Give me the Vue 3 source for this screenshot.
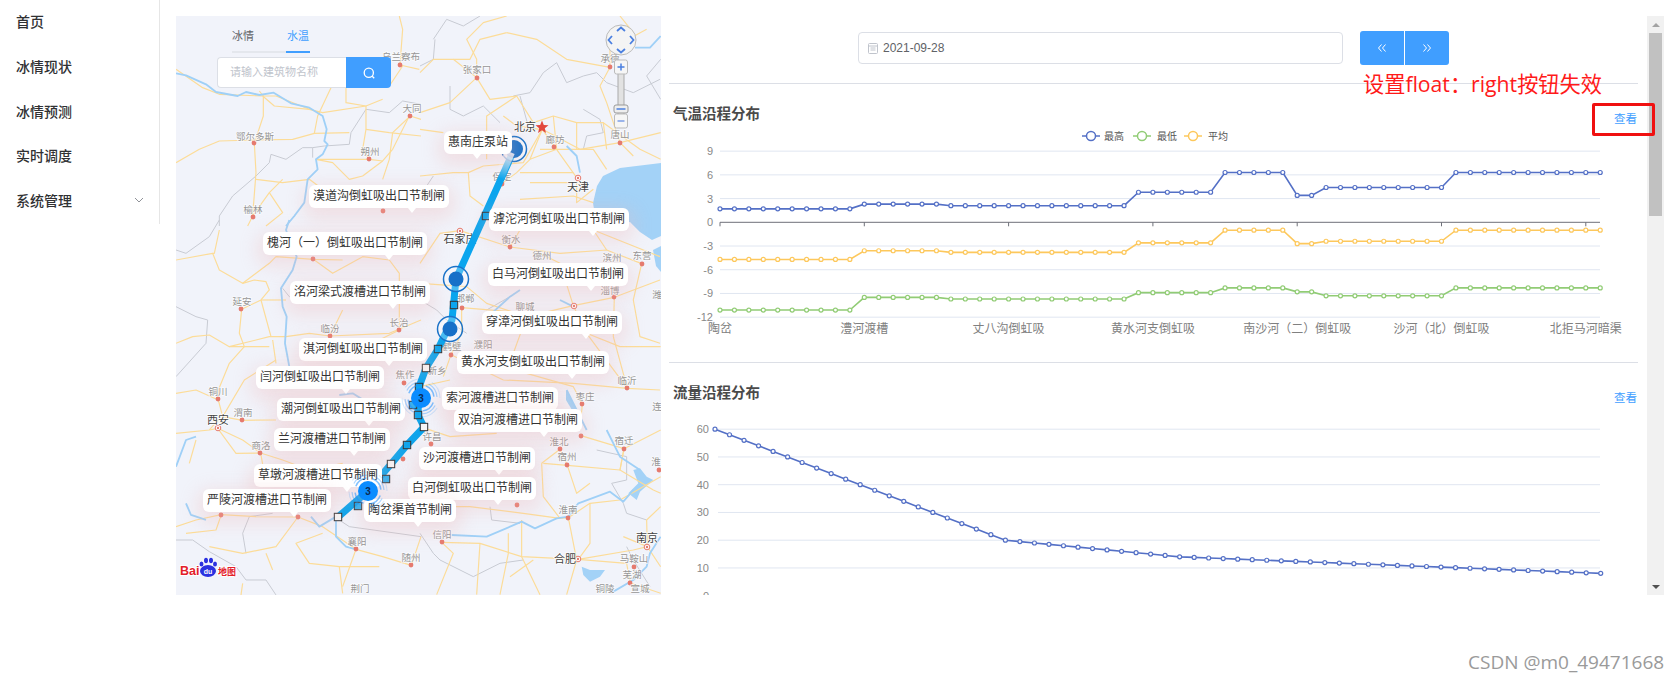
<script setup>
const menu = ["首页", "冰情现状", "冰情预测", "实时调度", "系统管理"];

// 地图底图：按 3 倍裁剪图里的坐标抄下来的，每块一个原点
const tiles = [
  {
    x: 176, y: 16,
    roads: [
      "0,440 70,400 130,375 235,372 350,370 415,352 520,350", "235,382 262,300 262,240 250,225",
      "0,160 80,215 130,235 260,240 300,240 400,280", "260,240 295,270 400,280 440,290 570,270 620,250",
      "235,382 240,470 230,600 215,630", "415,352 425,300 465,215 455,190",
      "510,215 510,260 570,270 570,340 560,400 580,430 620,435 650,400 700,300", "580,430 500,430 420,430",
      "420,430 470,440 520,490 560,480 620,435", "240,490 320,500 400,490 440,520", "280,530 320,590 270,630",
      "672,147 680,40 670,0", "672,147 730,160", "640,210 680,150", "703,300 650,350 640,430 620,490",
      "703,300 735,310", "570,340 640,350 735,360", "230,600 280,530 320,490",
    ],
    borders: [
      "130,630 130,600 170,540 240,480 280,440 285,415 330,430 380,395 410,395 410,425",
      "410,395 445,390 520,385 525,350 570,280 640,290 680,255 735,265",
    ],
    rivers: [
      "0,172 30,178 90,205 120,228 185,240 210,228 250,237 293,230 345,262 400,275 440,300 452,340 445,375 455,385 440,415 420,430 425,460 395,490 385,560 355,600 330,630",
    ],
  },
  {
    x: 420, y: 16,
    roads: [
      "170,185 170,130 140,70 190,20 260,0", "170,185 100,130 40,130 0,170",
      "170,185 210,250 290,240 340,320 400,300 470,320 550,320 660,400 722,430", "0,290 90,260 170,185",
      "260,50 180,70 150,130 100,130", "260,50 350,70 440,130 570,154 570,100 680,40",
      "570,154 540,210 560,260 600,380 640,420", "0,480 100,470 145,470 190,450 310,440 367,340",
      "367,340 330,430 290,470 250,500 200,580", "367,340 470,485 470,560 520,520",
      "367,340 480,400 600,380 722,350", "360,400 520,400 560,460", "300,470 460,470", "330,500 460,500",
      "145,470 150,540 190,570", "0,340 70,350", "250,300 290,330 360,340", "600,0 640,50",
      "200,430 200,300 290,240", "470,320 470,400", "550,320 560,400", "400,300 410,400 330,430", "300,550 460,540 520,560",
    ],
    borders: [
      "40,70 80,10 130,30 180,0", "0,150 40,130 45,70", "90,210 90,280 130,300 190,270 240,320",
      "280,240 330,230 370,170 410,140 440,200 490,180 530,170 560,200 640,230 720,190", "330,350 300,240",
      "490,280 540,310 550,350 500,360 490,400", "722,130 680,180 722,250", "40,480 20,510 40,560",
    ],
    rivers: ["645,95 690,95 722,60", "440,390 470,420 480,470"],
  },
  {
    x: 176, y: 220,
    roads: [
      "0,120 110,100 130,150 200,190 280,130 300,110 412,118 500,120", "110,100 115,100 130,30",
      "200,190 235,180 270,185 280,210 255,240 197,268 190,340 205,380 160,430 127,510 127,540 140,590",
      "0,370 50,350 100,345 160,380 280,350 330,350 400,340 462,348 500,270", "255,240 285,350", "255,240 330,240",
      "160,380 280,380", "300,420 205,480 140,590", "140,590 199,601 300,600",
      "412,118 470,160 560,110 640,120 670,160 670,330 590,370", "462,348 640,340 735,300",
      "0,520 60,510 127,540", "100,630 127,600", "290,360 300,430",
    ],
    borders: ["0,260 60,290 95,300 90,370 0,470", "130,0 100,50 30,100 0,90", "320,205 340,230 480,230"],
    rivers: [
      "340,0 330,30 362,110 350,150 315,205 320,260 332,290 327,370 340,440 330,500",
      "490,525 530,520 570,545",
    ],
  },
  {
    x: 420, y: 220,
    roads: [
      "120,32 60,40 0,130", "120,32 270,81 420,100 560,90 665,131", "270,81 300,30",
      "0,190 140,200 200,250 320,290 460,257 583,232 720,180", "460,257 420,130 360,100", "460,257 500,340 622,505",
      "320,290 280,400 320,460 460,500 487,552 480,630", "125,263 125,340 93,404 70,470",
      "93,404 250,480 460,490 622,505 720,510", "583,232 580,350 622,505", "665,131 640,240 660,350 720,370",
      "560,90 520,30", "125,263 330,280 500,340 600,380 722,380", "0,500 90,480", "520,30 720,110",
    ],
    borders: ["0,240 50,270 80,300 140,340", "200,270 270,230"],
    rivers: ["215,280 270,230 300,210", "420,240 460,260", "440,510 470,570 500,630"],
  },
  {
    x: 176, y: 420,
    roads: [
      "0,40 100,30 125,25 200,60 254,99 320,120 400,150 500,130", "125,25 180,100 254,99 270,190",
      "0,320 60,300 136,284 240,290 366,291 440,320 540,388", "136,284 120,330 30,340", "366,291 300,380 200,400 100,380",
      "540,388 620,410 706,436", "540,388 500,500", "440,340 360,370 400,430 490,440 610,440", "490,440 500,520",
      "706,436 735,350", "200,490 195,525", "270,400 290,450", "60,60 40,130",
    ],
    borders: [
      "0,360 50,360 100,395 180,440 210,480 270,480 300,525", "200,340 220,290 290,280",
      "490,300 520,320 735,350", "200,340 210,400",
    ],
    rivers: ["0,140 30,60 60,50", "30,250 45,285 90,300", "405,290 430,320 480,290", "480,300 480,350 510,380 540,388"],
  },
  {
    x: 420, y: 420,
    roads: [
      "0,260 150,260 310,280 420,295 445,293 510,250 600,240 722,170", "365,130 370,230 420,295",
      "442,136 470,220 510,190", "420,88 442,136 600,150 612,86 722,30", "442,136 370,130", "420,88 365,130",
      "612,86 600,150 700,210 722,220", "65,367 180,370 305,410 475,418 640,390 682,380", "65,367 100,400 50,524",
      "180,370 170,524", "265,340 265,400 240,524", "305,300 305,410 360,524", "445,293 470,420 440,524",
      "510,250 510,370 475,418", "475,418 620,430 631,489 722,520", "682,380 722,440", "610,350 682,380 680,300 722,260",
      "0,20 90,50 230,40", "483,47 612,86", "340,420 270,470",
    ],
    borders: [
      "0,340 40,400 60,420 160,470 240,430 310,420", "210,260 215,300 300,310",
      "530,90 620,110 620,180 575,190 610,250 620,280 680,300", "620,380 640,420 690,500",
    ],
    rivers: [
      "95,345 200,350 305,305 345,325 410,295 445,290 475,250 570,215 610,245 640,210",
      "580,515 640,480 680,440 690,400 722,350", "560,30 600,110 660,150",
    ],
  },
];

const lakes = [
  "661,163 620,168 603,176 597,186 593,203 597,228 630,222 640,232 652,240 661,236",
  "653,250 661,246 661,272 656,266",
  "633.3,470 640,468.3 646.7,476.7 653.3,480 640,491.7 636.7,500 628.3,493.3 638.3,483.3",
  "581.7,566.7 590,570 605,570 600,576.7 590,581.7 583.3,575",
  "566,390 572,400 578,412 572,410 566,400",
];

const cities = [
  ["乌兰察布", 401, 60, 400, 65], ["鄂尔多斯", 255, 140, 254, 143], ["朔州", 370, 155, 369, 159],
  ["大同", 412, 112, 410, 116], ["榆林", 253, 213, 253, 217], ["张家口", 477, 73, 477, 78],
  ["承德", 610, 62, 610, 67], ["唐山", 620, 138, 620, 143], ["廊坊", 555, 143, 554, 147],
  ["保定", 502, 180, 502, 184], ["衡水", 511, 243, 510, 247], ["德州", 542, 259], ["滨州", 612, 261],
  ["东营", 642, 259, 642, 264], ["淄博", 610, 294, 614, 297], ["聊城", 525, 310], ["邯郸", 465, 302, 462, 308],
  ["濮阳", 483, 348], ["鹤壁", 452, 350, 451, 355], ["新乡", 437, 374], ["枣庄", 585, 400, 582, 404],
  ["临沂", 627, 384, 627, 388], ["连", 657, 410], ["潍", 657, 298], ["延安", 242, 305, 241, 309],
  ["临汾", 330, 332, 330, 336], ["长治", 399, 326, 399, 330], ["焦作", 405, 378, 404, 383],
  ["铜川", 218, 395, 218, 399], ["渭南", 243, 416, 242, 420], ["商洛", 261, 449, 260, 453],
  ["襄阳", 357, 545, 356, 549], ["随州", 411, 561, 411, 565], ["荆门", 360, 592], ["许昌", 432, 440, 431, 444],
  ["淮北", 559, 445, 560, 449], ["宿州", 567, 460, 567, 465], ["宿迁", 624, 444, 624, 449],
  ["淮", 656, 465, 659, 470], ["淮南", 568, 513, 568, 518], ["信阳", 442, 538, 442, 542],
  ["马鞍山", 634, 562, 634, 567], ["芜湖", 632, 578, 630, 583], ["铜陵", 605, 592], ["宣城", 640, 592],
];
const bigCities = [
  ["北京", 525, 131], ["天津", 578, 191], ["石家庄", 460, 243], ["西安", 218, 424], ["合肥", 565, 563], ["南京", 647, 542],
];
const ringDots = [[578, 178], [460, 231], [574, 306], [218, 428], [578, 559], [647, 547]];
const plainDots = [[221, 515], [298, 517], [403, 459], [517, 505], [581, 436], [313, 259], [383, 211]];

const callouts = [
  ["惠南庄泵站", 444, 131, 477], ["漠道沟倒虹吸出口节制闸", 309, 185, 412], ["滹沱河倒虹吸出口节制闸", 489, 208, 593],
  ["槐河（一）倒虹吸出口节制闸", 263, 232, 389], ["洺河梁式渡槽进口节制闸", 290, 281, 393],
  ["白马河倒虹吸出口节制闸", 488, 263, 591], ["穿漳河倒虹吸出口节制闸", 482, 311, 586],
  ["淇河倒虹吸出口节制闸", 299, 338, 389], ["黄水河支倒虹吸出口节制闸", 457, 351, 572],
  ["闫河倒虹吸出口节制闸", 256, 366, 346], ["索河渡槽进口节制闸", 442, 387, 500],
  ["潮河倒虹吸出口节制闸", 277, 398, 369], ["双洎河渡槽进口节制闸", 454, 409, 544],
  ["兰河渡槽进口节制闸", 274, 428, 354], ["沙河渡槽进口节制闸", 419, 447, 499],
  ["草墩河渡槽进口节制闸", 254, 464, 347], ["白河倒虹吸出口节制闸", 408, 477, 498],
  ["严陵河渡槽进口节制闸", 203, 489, 294], ["陶岔渠首节制闸", 364, 499, 418],
].map(([text, x, y, tail]) => ({ text, left: x - 176, top: y - 16, tail: tail - x }));

const canal = "514,150 456,279 452,320 438,349 426,368 419,387 418,415 424,427 407,445 391,464 368,491 338,517";
const gates = [
  [486, 216, false], [454, 305, false], [438, 349, false], [426, 368, true], [419, 387, false], [413, 405, false],
  [418, 415, false], [424, 427, true], [407, 445, false], [391, 464, true], [386, 479, false], [358, 506, false], [338, 517, true],
];
const pumps = [[514, 149, 9], [456, 279, 7.5], [450, 329, 7.5]];
const clusters = [[421, 398], [368, 491]];

// 折线图数据
function steps(parts) {
  return parts.flatMap(([n, v]) => Array(n).fill(v));
}
const high = steps([[10, 1.7], [6, 2.3], [13, 2.1], [6, 3.8], [5, 6.3], [2, 3.4], [9, 4.4], [11, 6.3]]);
const low = steps([[10, -11.1], [6, -9.5], [13, -9.7], [6, -8.9], [5, -8.3], [2, -8.8], [9, -9.3], [11, -8.3]]);
const avg = steps([[10, -4.7], [6, -3.6], [13, -3.8], [6, -2.6], [5, -1], [2, -2.7], [9, -2.4], [11, -1]]);

const tempY = (v) => 222.3 - v * 7.905;
const tempX = (i) => 720 + i * 14.43;
const tempSeries = [
  { color: "#fdc85c", data: avg },
  { color: "#91cc75", data: low },
  { color: "#5470c6", data: high },
].map((s) => {
  const pts = s.data.map((v, i) => [tempX(i), tempY(v)]);
  return { color: s.color, pts, line: pts.map((p) => p.join(",")).join(" ") };
});
const tempTicks = [9, 6, 3, 0, -3, -6, -9, -12].map((v) => ({ v, y: tempY(v) }));
const tempLabels = ["陶岔", "澧河渡槽", "丈八沟倒虹吸", "黄水河支倒虹吸", "南沙河（二）倒虹吸", "沙河（北）倒虹吸", "北拒马河暗渠"]
  .map((text, i) => ({ text, x: tempX(i * 10) }));
const legend = [
  { name: "最高", color: "#5470c6", x: 1082, tx: 1104 },
  { name: "最低", color: "#91cc75", x: 1133, tx: 1157 },
  { name: "平均", color: "#fdc85c", x: 1184, tx: 1208 },
];

const flowY = (v) => 595.7 - v * 2.775;
const flowPts = Array.from({ length: 62 }, (_, i) => {
  let v;
  if (i <= 20) v = 60 - i * 2;
  else if (i <= 32) v = 20 - (i - 20) * 0.5;
  else v = 14 - (i - 32) * 0.205;
  return [715 + i * 14.52, flowY(v)];
});
const flowLine = flowPts.map((p) => p.join(",")).join(" ");
const flowTicks = [60, 50, 40, 30, 20, 10, 0].map((v) => ({ v, y: flowY(v) }));
</script>

<template>
  <div class="page">
    <aside class="sidebar">
      <div v-for="(item, i) in menu" :key="item" class="menu-item">
        <span>{{ item }}</span>
        <svg v-if="i === 4" class="chevron" width="10" height="6" viewBox="0 0 10 6">
          <path d="M1 1l4 4 4-4" fill="none" stroke="#909399" stroke-width="1" />
        </svg>
      </div>
    </aside>

    <main class="content">
      <section class="map">
        <svg class="map-svg" width="485" height="579" viewBox="176 16 485 579">
          <defs>
            <linearGradient id="canal-fade" gradientUnits="userSpaceOnUse" x1="510" y1="152" x2="499" y2="178">
              <stop offset="0" stop-color="#f3f5fb" stop-opacity="0.9" />
              <stop offset="1" stop-color="#f3f5fb" stop-opacity="0" />
            </linearGradient>
          </defs>
          <polygon v-for="l in lakes" :key="l" :points="l" fill="#a3d2f7" />
          <g v-for="t in tiles" :key="t.x + '-' + t.y" :transform="`translate(${t.x} ${t.y}) scale(0.3333)`" fill="none" stroke-linejoin="round">
            <polyline v-for="b in t.borders" :key="b" :points="b" stroke="#c8cbd3" stroke-width="3" />
            <polyline v-for="r in t.roads" :key="r" :points="r" stroke="#fcdc98" stroke-width="3.5" />
            <polyline v-for="r in t.rivers" :key="r" :points="r" stroke="#9fd0f7" stroke-width="5.5" />
          </g>
          <circle v-for="c in cities.filter((c) => c[3])" :key="c[0]" :cx="c[3]" :cy="c[4]" r="2.4" fill="#e57a6e" />
          <circle v-for="d in plainDots" :key="d[0]" :cx="d[0]" :cy="d[1]" r="2.4" fill="#e57a6e" />
          <g v-for="d in ringDots" :key="d[0]">
            <circle :cx="d[0]" :cy="d[1]" r="2.8" fill="#fff" stroke="#e57a6e" />
            <circle :cx="d[0]" :cy="d[1]" r="1.2" fill="#e57a6e" />
          </g>
          <text v-for="c in cities" :key="c[0]" :x="c[1]" :y="c[2]" class="city">{{ c[0] }}</text>
          <text v-for="c in bigCities" :key="c[0]" :x="c[1]" :y="c[2]" class="city big">{{ c[0] }}</text>
          <polygon points="542,120.5 543.8,125 548.5,125.3 544.8,128.2 546,133 542,130.3 538,133 539.2,128.2 535.5,125.3 540.2,125" fill="#e2483d" />

          <polyline :points="canal" fill="none" stroke="#0aa5ee" stroke-width="7" stroke-linejoin="round" stroke-linecap="round" />
          <g v-for="p in pumps" :key="p[1]">
            <circle :cx="p[0]" :cy="p[1]" r="12.5" fill="rgba(255,255,255,0.25)" stroke="#1a73c9" stroke-width="1.5" />
            <circle :cx="p[0]" :cy="p[1]" :r="p[2]" fill="#1670c8" />
          </g>
          <path d="M510 152L499 178" stroke="url(#canal-fade)" stroke-width="10" />
          <rect v-for="g in gates" :key="g[0] + '-' + g[1]" :x="g[0] - 3.7" :y="g[1] - 3.7" width="7.4" height="7.4" :fill="g[2] ? '#f6f6f6' : 'rgba(10,165,238,0.85)'" stroke="#333" stroke-width="1" />
        </svg>

        <div v-for="c in callouts" :key="c.text" class="callout" :style="{ left: c.left + 'px', top: c.top + 'px', '--tail': c.tail + 'px' }">{{ c.text }}</div>

        <svg class="map-svg over" width="485" height="579" viewBox="176 16 485 579">
          <g v-for="c in clusters" :key="c[0]" fill="none" stroke="#1e90ff">
            <circle :cx="c[0]" :cy="c[1]" r="13" stroke-width="1.5" stroke-opacity="0.55" stroke-dasharray="14 6.4" :transform="`rotate(20 ${c[0]} ${c[1]})`" />
            <circle :cx="c[0]" :cy="c[1]" r="16" stroke-width="1.2" stroke-opacity="0.35" stroke-dasharray="16 9" :transform="`rotate(28 ${c[0]} ${c[1]})`" />
            <circle :cx="c[0]" :cy="c[1]" r="19" stroke-width="1" stroke-opacity="0.18" stroke-dasharray="18 12" :transform="`rotate(32 ${c[0]} ${c[1]})`" />
            <circle :cx="c[0]" :cy="c[1]" r="10" fill="#0a8cff" stroke="none" />
            <text :x="c[0]" :y="c[1] + 3.5" class="cluster-num">3</text>
          </g>

          <!-- 平移缩放控件 -->
          <circle cx="621" cy="40" r="15" fill="#f4f4f4" stroke="#bbb" />
          <g fill="none" stroke="#4a7fe0" stroke-width="1.8">
            <path d="M617 31l4-3.5 4 3.5" />
            <path d="M617 49l4 3.5 4-3.5" />
            <path d="M612 36l-3.5 4 3.5 4" />
            <path d="M630 36l3.5 4-3.5 4" />
          </g>
          <rect x="618" y="73" width="6" height="42" fill="#e2e2e2" stroke="#aaa" />
          <rect x="614.5" y="60" width="13" height="14" rx="2" fill="#f6f6f6" stroke="#bbb" />
          <path d="M617.5 67h7M621 63.5v7" stroke="#4a7fe0" stroke-width="1.5" />
          <rect x="614" y="105" width="14" height="8" rx="2" fill="#eee" stroke="#999" />
          <path d="M616.5 109h9" stroke="#4a7fe0" stroke-width="1.5" />
          <rect x="614.5" y="114" width="13" height="14" rx="2" fill="#f6f6f6" stroke="#bbb" />
          <path d="M617.5 121h7" stroke="#7c9ee6" stroke-width="1.5" />

          <!-- 百度地图 logo -->
          <text x="180" y="575" class="logo">Bai</text>
          <g fill="#2b31e0" stroke="#fff" stroke-width="0.6" paint-order="stroke">
            <ellipse cx="208" cy="571" rx="8" ry="6" />
            <ellipse cx="201.5" cy="564" rx="2" ry="2.6" />
            <ellipse cx="206" cy="560.5" rx="2" ry="2.8" />
            <ellipse cx="211" cy="560.5" rx="2" ry="2.8" />
            <ellipse cx="215" cy="564" rx="2" ry="2.6" />
          </g>
          <text x="208" y="574" class="logo-du">du</text>
          <text x="218" y="575" class="logo map-word">地图</text>
        </svg>

        <div class="map-tools">
          <div class="tabs">
            <span class="tab first">冰情</span>
            <span class="tab active">水温</span>
          </div>
          <div class="search">
            <span class="search-input">请输入建筑物名称</span>
            <span class="search-btn">
              <svg width="14" height="14" viewBox="0 0 14 14">
                <circle cx="6.8" cy="6.8" r="4.6" fill="none" stroke="#fff" stroke-width="1.3" />
                <path d="M10.2 10.2l2 2" stroke="#fff" stroke-width="1.3" />
              </svg>
            </span>
          </div>
        </div>
      </section>

      <section class="panel">
        <div class="panel-body">
          <div class="toolbar">
            <div class="date-input">
              <svg width="10" height="12" viewBox="0 0 10 12">
                <rect x="0.5" y="1.5" width="9" height="10" rx="1" fill="none" stroke="#c0c4cc" />
                <path d="M0.5 4h9M2.5 6h5M2.5 8h5" stroke="#c0c4cc" />
              </svg>
              <span>2021-09-28</span>
            </div>
            <div class="btn-group">
              <button class="day-btn">
                <svg width="12" height="12" viewBox="0 0 12 12"><path d="M5.5 2.5L2.5 6l3 3.5M9.5 2.5L6.5 6l3 3.5" fill="none" stroke="#fff" /></svg>
              </button>
              <button class="day-btn">
                <svg width="12" height="12" viewBox="0 0 12 12"><path d="M2.5 2.5L5.5 6l-3 3.5M6.5 2.5L9.5 6l-3 3.5" fill="none" stroke="#fff" /></svg>
              </button>
            </div>
          </div>

          <div class="divider"></div>
          <div class="chart-head">
            <h3>气温沿程分布</h3>
            <a class="view-link">查看</a>
          </div>
          <svg class="chart" width="987" height="234" viewBox="661 128 987 234">
            <g v-for="l in legend" :key="l.name">
              <path :d="`M${l.x} 136h18`" :stroke="l.color" stroke-width="1.5" />
              <circle :cx="l.x + 9" cy="136" r="4.5" fill="#fff" :stroke="l.color" stroke-width="1.5" />
              <text :x="l.tx" y="139.5" class="legend-text">{{ l.name }}</text>
            </g>
            <line v-for="t in tempTicks.filter((t) => t.v !== 0)" :key="t.v" x1="720" x2="1600" :y1="t.y" :y2="t.y" stroke="#e0e6f1" />
            <line x1="720" x2="1600" :y1="tempY(0)" :y2="tempY(0)" stroke="#6e7079" />
            <line v-for="l in tempLabels" :key="l.x" :x1="l.x" :x2="l.x" :y1="tempY(0)" :y2="tempY(0) + 4" stroke="#6e7079" />
            <text v-for="t in tempTicks" :key="t.v" x="713" :y="t.y + 4" class="tick">{{ t.v }}</text>
            <text v-for="l in tempLabels" :key="l.text" :x="l.x" y="333" class="x-label">{{ l.text }}</text>
            <g v-for="s in tempSeries" :key="s.color">
              <polyline :points="s.line" fill="none" :stroke="s.color" stroke-width="1.6" />
              <circle v-for="(p, i) in s.pts" :key="i" :cx="p[0]" :cy="p[1]" r="2" fill="#fff" :stroke="s.color" stroke-width="1.2" />
            </g>
          </svg>

          <div class="divider"></div>
          <div class="chart-head">
            <h3>流量沿程分布</h3>
            <a class="view-link">查看</a>
          </div>
          <svg class="chart" width="987" height="200" viewBox="661 407 987 200">
            <line v-for="t in flowTicks" :key="t.v" x1="718" x2="1600" :y1="t.y" :y2="t.y" stroke="#e0e6f1" />
            <text v-for="t in flowTicks" :key="t.v" x="709" :y="t.y + 4" class="tick">{{ t.v }}</text>
            <polyline :points="flowLine" fill="none" stroke="#5470c6" stroke-width="1.6" />
            <circle v-for="(p, i) in flowPts" :key="i" :cx="p[0]" :cy="p[1]" r="2" fill="#fff" stroke="#5470c6" stroke-width="1.2" />
          </svg>
        </div>

        <div class="scrollbar">
          <div class="arrow-cell"><i class="arrow up"></i></div>
          <div class="thumb"></div>
          <div class="arrow-cell"><i class="arrow down"></i></div>
        </div>
      </section>
    </main>

    <div class="note">设置float：right按钮失效</div>
    <div class="note-box"></div>
    <div class="watermark">CSDN @m0_49471668</div>
  </div>
</template>

<style scoped>
.page {
  position: relative;
  display: flex;
  align-items: flex-start;
  height: 683px;
  overflow: hidden;
  background: #fff;
  font-family: "Liberation Sans", "Noto Sans CJK SC", sans-serif;
}

/* 左侧菜单 */
.sidebar {
  flex: none;
  width: 159px;
  height: 224px;
  border-right: 1px solid #e6e6e6;
}
.menu-item {
  display: flex;
  align-items: center;
  justify-content: space-between;
  height: 44.7px;
  padding: 0 15px 0 16px;
  font-size: 14px;
  font-weight: 500;
  color: #303133;
  transform: translateY(-1px);
}

.content {
  display: flex;
  margin: 16px 0 0 16px;
}

/* 地图 */
.map {
  position: relative;
  flex: none;
  width: 485px;
  height: 579px;
  overflow: hidden;
  background: #f1f3fa;
}
.map-svg {
  display: block;
}
.over {
  position: absolute;
  left: 0;
  top: 0;
}
.city {
  font-size: 9.5px;
  fill: #969696;
  text-anchor: middle;
  stroke: #fff;
  stroke-width: 1.5px;
  stroke-opacity: 0.7;
  paint-order: stroke;
}
.big {
  font-size: 11px;
  fill: #444;
  stroke-opacity: 0.9;
}
.callout {
  position: absolute;
  padding: 0 4px;
  height: 23px;
  line-height: 23px;
  font-size: 12px;
  color: #333;
  white-space: nowrap;
  background: #fff;
  border-radius: 6px;
  box-shadow: 0 6px 18px 5px rgba(238, 180, 180, 0.3);
}
.callout::after {
  content: "";
  position: absolute;
  left: var(--tail);
  top: 100%;
  margin-left: -4px;
  border: 4px solid transparent;
  border-top: 5px solid #fff;
}
.cluster-num {
  font-size: 10px;
  font-weight: 700;
  fill: #0b2a55;
  stroke: none;
  text-anchor: middle;
}
.logo {
  font-size: 12.5px;
  font-weight: 700;
  fill: #e3202a;
  stroke: #fff;
  stroke-width: 2px;
  paint-order: stroke;
}
.map-word {
  font-size: 9px;
}
.logo-du {
  font-size: 7px;
  font-weight: 700;
  fill: #fff;
  text-anchor: middle;
}
.map-tools {
  position: absolute;
  left: 41px;
  top: 11px;
}
.tabs {
  display: flex;
  padding-left: 15px;
  height: 26px;
}
.tab {
  font-size: 11px;
  line-height: 18px;
  color: #606266;
  border-bottom: 2px solid #e4e7ed;
}
.first {
  width: 54px;
}
.active {
  width: 24px;
  padding-left: 1px;
  box-sizing: border-box;
  color: #409eff;
  border-bottom-color: #409eff;
}
.search {
  display: flex;
  margin-top: 4px;
  height: 31px;
}
.search-input {
  box-sizing: border-box;
  width: 129px;
  padding-left: 12px;
  font-size: 11px;
  line-height: 29px;
  color: #c0c4cc;
  background: #fff;
  border: 1px solid #dcdfe6;
  border-right: none;
  border-radius: 4px 0 0 4px;
}
.search-btn {
  display: flex;
  align-items: center;
  justify-content: center;
  width: 45px;
  background: #409eff;
  border-radius: 0 4px 4px 0;
}

/* 右侧面板 */
.panel {
  display: flex;
  flex: none;
  width: 1003px;
  height: 579px;
  overflow: hidden;
  background: #fff;
}
.panel-body {
  flex: none;
  width: 986px;
}
.toolbar {
  box-sizing: border-box;
  display: flex;
  align-items: center;
  gap: 17px;
  height: 67px;
  padding: 0 0 3px 197px;
}
.date-input {
  box-sizing: border-box;
  display: flex;
  align-items: center;
  gap: 5px;
  width: 485px;
  height: 32px;
  padding-left: 9px;
  font-size: 12px;
  color: #606266;
  border: 1px solid #dcdfe6;
  border-radius: 4px;
}
.btn-group {
  display: flex;
  gap: 1px;
}
.day-btn {
  display: flex;
  align-items: center;
  justify-content: center;
  width: 44px;
  height: 34px;
  padding: 0;
  border: none;
  background: #409eff;
}
.day-btn:first-child {
  border-radius: 3px 0 0 3px;
}
.day-btn:last-child {
  border-radius: 0 3px 3px 0;
}
.divider {
  height: 1px;
  margin: 0 9px 0 8px;
  background: #dcdfe6;
}
.chart-head {
  display: flex;
  justify-content: space-between;
  height: 44px;
  padding: 0 10px 0 12px;
}
.chart-head h3 {
  margin: 20px 0 0;
  font-size: 14.5px;
  line-height: 20px;
  font-weight: 700;
  color: #4a4a4a;
}
.view-link {
  align-self: flex-end;
  font-size: 11.5px;
  line-height: 18px;
  color: #409eff;
}
.chart {
  display: block;
}
.tick {
  font-size: 11px;
  fill: #888;
  text-anchor: end;
}
.x-label {
  font-size: 12px;
  fill: #808080;
  text-anchor: middle;
}
.legend-text {
  font-size: 10px;
  fill: #555;
}
.scrollbar {
  display: flex;
  flex: none;
  flex-direction: column;
  width: 17px;
  background: #f1f1f1;
}
.arrow-cell {
  display: flex;
  align-items: center;
  justify-content: center;
  height: 17px;
}
.arrow {
  width: 0;
  height: 0;
  border: 4px solid transparent;
}
.up {
  margin-top: -4px;
  border-bottom: 4px solid #a3a3a3;
}
.down {
  margin-top: 4px;
  border-top: 4px solid #505050;
}
.thumb {
  height: 183px;
  margin: 0 2px auto;
  background: #c1c1c1;
}

/* 截图上的红色标注 */
.note {
  position: absolute;
  left: 1363px;
  top: 69px;
  font-family: "Open Sans", "Noto Sans CJK SC", sans-serif;
  font-size: 21.2px;
  line-height: 30px;
  color: #ff1a1a;
  white-space: nowrap;
}
.note-box {
  position: absolute;
  left: 1592px;
  top: 103px;
  width: 63px;
  height: 33px;
  box-sizing: border-box;
  border: 3px solid #f01010;
  border-radius: 2px;
}
.watermark {
  position: absolute;
  left: 1468px;
  top: 649px;
  font-family: "Open Sans", sans-serif;
  font-size: 19px;
  line-height: 26px;
  color: #9a9a9a;
  white-space: nowrap;
}
</style>
